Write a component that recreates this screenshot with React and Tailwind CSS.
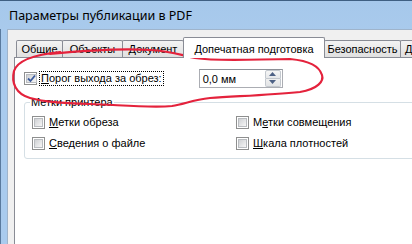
import React from "react";

const font = { fontFamily: '"Liberation Sans", Arial, sans-serif' };

function Check({ checked }) {
  return (
    <span className="w-[13px] h-[13px] border border-[#8e8f8f] bg-white p-[1px] flex shrink-0">
      <span className="flex-1 border border-[#b9bcc0] bg-gradient-to-br from-[#cfd1d4] to-[#f6f6f6] flex items-center justify-center">
        {checked && (
          <svg width="9" height="9" viewBox="0 0 9 9">
            <path d="M1 4.5 L3.5 7 L8 1.5" fill="none" stroke="#3a5a9c" strokeWidth="1.8" />
          </svg>
        )}
      </span>
    </span>
  );
}

function Label({ children }) {
  return <span className="text-[11px] leading-[13px] text-black whitespace-nowrap">{children}</span>;
}

function Tab({ w, children, active, left }) {
  if (active)
    return (
      <div
        className={`relative z-10 shrink-0 -ml-px mb-[-1px] h-[21px] bg-white border border-b-0 border-[#898c95] rounded-t-[2px] flex justify-center pt-[5px] text-[11px] leading-[13px] whitespace-nowrap ${w}`}
      >
        {children}
      </div>
    );
  return (
    <div
      className={`shrink-0 -ml-px first:ml-0 h-[17px] border border-b-0 border-[#898c95] rounded-t-[2px] bg-gradient-to-b from-[#f3f3f3] to-[#e0e0e0] flex pt-[2px] text-[11px] leading-[13px] whitespace-nowrap overflow-hidden ${left ? "justify-start pl-[4px]" : "justify-center"} ${w}`}
    >
      {children}
    </div>
  );
}

export default function App() {
  return (
    <div
      className="relative w-[412px] h-[244px] overflow-hidden flex flex-col border-t border-[#3f5f82] bg-gradient-to-b from-[#a6c8eb] to-[#bcd9f6]"
      style={font}
    >
      <div className="h-[28px] shrink-0 flex items-center pl-[9px] pt-[3px]">
        <span className="text-[12.5px] text-black" style={{ fontFamily: '"Noto Sans", sans-serif' }}>
          Параметры публикации в PDF
        </span>
      </div>
      <div className="flex-1 flex min-h-0">
        <div className="w-[7px] shrink-0 border-l border-[#5a7a9e] bg-[#a9cbee]" />
        <div className="flex-1 flex flex-col min-w-0 border-l border-t border-[#9fb4cb] bg-[#f0f0f0] pl-[6px] pt-[7px]">
          <div className="flex items-end h-[20px] pl-[2px] shrink-0">
            <Tab w="w-[47px]">Общие</Tab>
            <Tab w="w-[61px]">Объекты</Tab>
            <Tab w="w-[62px]">Документ</Tab>
            <Tab w="w-[142px]" active>
              Допечатная подготовка
            </Tab>
            <Tab w="w-[77px]">Безопасность</Tab>
            <Tab w="w-[80px]" left>
              Дополнительно
            </Tab>
          </div>
          <div className="flex-1 border-l border-t border-[#898c95] bg-white pt-[11px] pl-[9px] flex flex-col">
            <div className="flex items-center h-[18px]">
              <Check checked />
              <span className="ml-[2px] px-[1px] border border-dotted border-black flex items-center h-[15px]">
                <Label>
                  <u>П</u>орог выхода за обрез:
                </Label>
              </span>
              <div className="ml-[35px] w-[84px] h-[19px] border border-[#abadb3] border-t-[#8c8f96] flex items-center bg-white">
                <span className="flex-1 pl-[3px]">
                  <Label>0,0 мм</Label>
                </span>
                <div className="w-[16px] h-[17px] flex flex-col mr-px">
                  <div className="flex-1 border border-[#c3c8ce] rounded-t-[2px] bg-gradient-to-b from-[#f6f6f6] to-[#e6e8ea] flex items-center justify-center">
                    <svg width="7" height="4" viewBox="0 0 7 4">
                      <path d="M0 4 L3.5 0 L7 4 Z" fill="#4d6185" />
                    </svg>
                  </div>
                  <div className="flex-1 border border-t-0 border-[#c3c8ce] rounded-b-[2px] bg-gradient-to-b from-[#f0f0f0] to-[#e2e4e6] flex items-center justify-center">
                    <svg width="7" height="4" viewBox="0 0 7 4">
                      <path d="M0 0 L3.5 4 L7 0 Z" fill="#4d6185" />
                    </svg>
                  </div>
                </div>
              </div>
            </div>
            <fieldset className="mt-[9px] w-[420px] h-[63px] border border-[#d5dfe5] rounded-[3px] pl-[7px] pt-[7px] text-[11px] leading-[13px]">
              <legend className="ml-[-2px] px-[1px] text-[11px] leading-[13px]">
                <Label>Метки принтера</Label>
              </legend>
              <div className="grid grid-cols-[204px_1fr] gap-y-[8px]">
                <div className="flex items-center gap-[4px] h-[13px]">
                  <Check />
                  <Label>
                    <u>М</u>етки обреза
                  </Label>
                </div>
                <div className="flex items-center gap-[4px] h-[13px]">
                  <Check />
                  <Label>
                    М<u>е</u>тки совмещения
                  </Label>
                </div>
                <div className="flex items-center gap-[4px] h-[13px]">
                  <Check />
                  <Label>
                    <u>С</u>ведения о файле
                  </Label>
                </div>
                <div className="flex items-center gap-[4px] h-[13px]">
                  <Check />
                  <Label>
                    <u>Ш</u>кала плотностей
                  </Label>
                </div>
              </div>
            </fieldset>
          </div>
        </div>
      </div>
      <svg
        className="absolute inset-0 pointer-events-none"
        width="412"
        height="244"
        viewBox="0 0 412 244"
      >
        <path
          d="M60 51 C 40 53, 18 58, 14 70 C 11 82, 16 93, 30 97 C 45 101, 60 102, 90 103 C 120 104, 150 107, 172 105 C 185 103, 192 99, 210 97 C 240 95, 270 94, 300 91 C 318 88, 324 80, 322 74 C 319 65, 310 60, 290 58 C 260 58, 220 61, 195 57 C 180 54, 172 50, 150 49 C 120 47, 90 49, 50 53"
          fill="none"
          stroke="#e4223c"
          strokeWidth="2.2"
          strokeLinecap="round"
        />
      </svg>
    </div>
  );
}
